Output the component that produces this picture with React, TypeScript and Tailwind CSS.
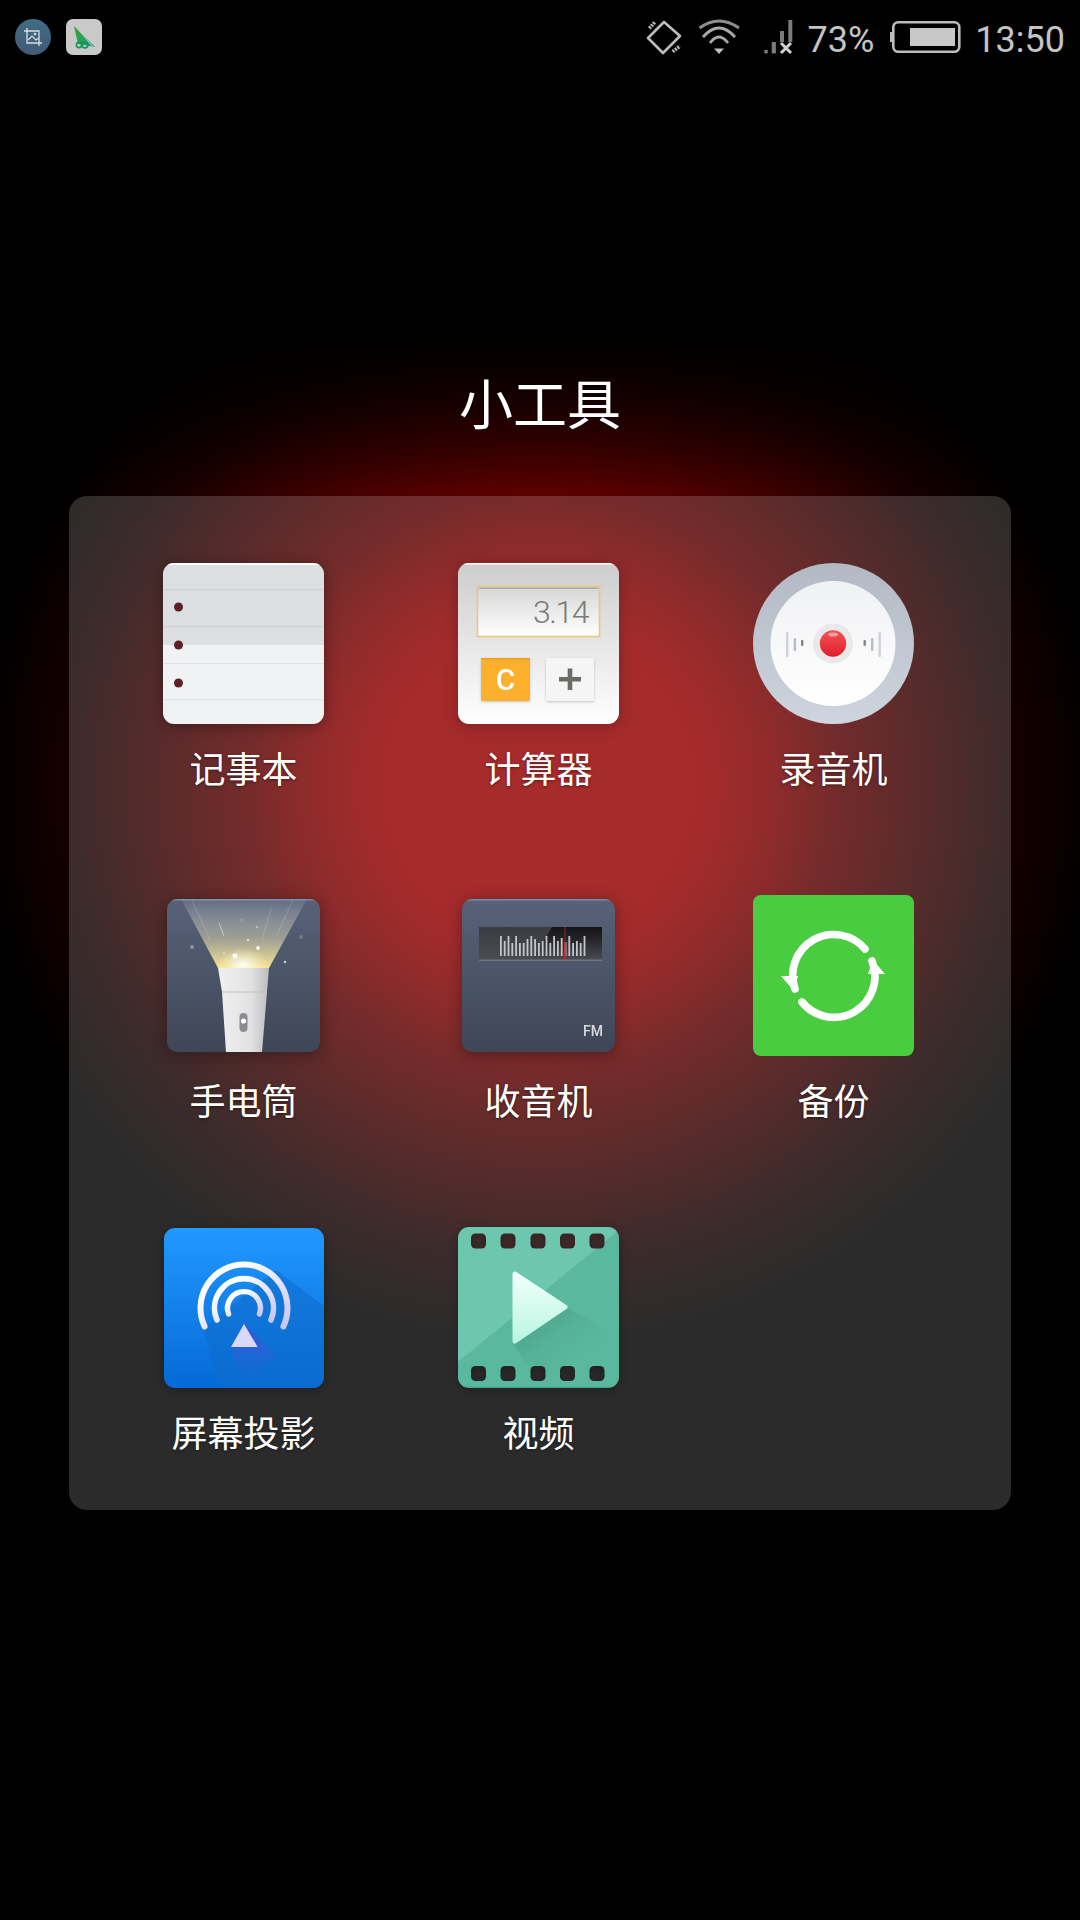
import React from "react";

const radioBars = [20, 15, 20, 13, 20, 13, 13, 17, 20, 17, 13, 15, 20, 13, 20, 15, 18, 14, 20, 13, 15, 13, 20];

function NotesIcon() {
  return (
    <svg width="161" height="161" viewBox="0 0 161 161" className="drop-shadow-[0_2px_7px_rgba(0,0,0,0.35)]">
      <defs>
        <clipPath id="notesClip"><rect width="161" height="161" rx="11" /></clipPath>
      </defs>
      <g clipPath="url(#notesClip)">
        <rect width="161" height="82" fill="#dcdfe2" />
        <rect y="82" width="161" height="79" fill="#f1f2f4" />
        <rect width="161" height="2" fill="#ffffff" />
        <rect y="26" width="161" height="1.2" fill="#cfd2d6" />
        <rect y="63" width="161" height="1.2" fill="#cfd2d6" />
        <rect y="100" width="161" height="1.2" fill="#e2e3e6" />
        <rect y="136" width="161" height="1.2" fill="#e2e3e6" />
        <circle cx="15.5" cy="44" r="4.5" fill="#5a2228" />
        <circle cx="15.5" cy="82" r="4.5" fill="#5a2228" />
        <circle cx="15.5" cy="120" r="4.5" fill="#5a2228" />
      </g>
    </svg>
  );
}

function CalcIcon() {
  return (
    <svg width="161" height="161" viewBox="0 0 161 161" className="drop-shadow-[0_2px_7px_rgba(0,0,0,0.25)]">
      <defs>
        <linearGradient id="calcBg" x1="0" y1="0" x2="0" y2="1">
          <stop offset="0" stopColor="#cdcdcd" />
          <stop offset="1" stopColor="#ffffff" />
        </linearGradient>
        <linearGradient id="calcDisp" x1="0" y1="0" x2="0" y2="1">
          <stop offset="0" stopColor="#d6d6d6" />
          <stop offset="1" stopColor="#ffffff" />
        </linearGradient>
        <filter id="calcBtn" x="-20%" y="-20%" width="140%" height="140%">
          <feDropShadow dx="0" dy="1" stdDeviation="1" floodColor="#000000" floodOpacity="0.22" />
        </filter>
        <clipPath id="calcClip"><rect width="161" height="161" rx="11" /></clipPath>
      </defs>
      <g clipPath="url(#calcClip)">
        <rect width="161" height="161" fill="url(#calcBg)" />
        <rect width="161" height="1.5" fill="#ffffff" />
      </g>
      <rect x="19.5" y="23.5" width="122" height="50" fill="url(#calcDisp)" stroke="#e8c87c" strokeWidth="1.6" />
      <rect x="21" y="24.5" width="119" height="1.4" fill="#a9a9a9" />
      <text x="130" y="60" textAnchor="end" fontFamily="Roboto, sans-serif" fontWeight="300" fontSize="32" fill="#7b7b76" letterSpacing="-1.5">3.14</text>
      <rect x="23" y="95" width="49" height="43" rx="1.5" fill="#fdb02d" filter="url(#calcBtn)" />
      <rect x="23" y="95" width="49" height="1.5" fill="#f09e22" />
      <text x="47.5" y="127" textAnchor="middle" fontFamily="Roboto, sans-serif" fontWeight="500" fontSize="30" fill="#ffffff">C</text>
      <rect x="88" y="95" width="48" height="43" rx="1.5" fill="#f5f5f5" filter="url(#calcBtn)" />
      <path d="M112 105.5V127M101 116.3H123" stroke="#6c6c66" strokeWidth="4.6" fill="none" />
    </svg>
  );
}

function RecorderIcon() {
  const bars: [number, number, number, string][] = [
    [33, 69, 25, "#cfd2d8"],
    [40.7, 75, 13, "#b9bcc2"],
    [48, 77, 6, "#80858b"],
    [110.5, 77, 6, "#80858b"],
    [118, 75, 13, "#b9bcc2"],
    [125.5, 69, 25, "#cfd2d8"],
  ];
  return (
    <svg width="161" height="161" viewBox="0 0 161 161">
      <defs>
        <linearGradient id="recOuter" x1="0" y1="0" x2="0" y2="1">
          <stop offset="0" stopColor="#b2b9c2" />
          <stop offset="1" stopColor="#ced5df" />
        </linearGradient>
        <linearGradient id="recInner" x1="0" y1="0" x2="0" y2="1">
          <stop offset="0" stopColor="#f0f1f3" />
          <stop offset="1" stopColor="#ffffff" />
        </linearGradient>
        <linearGradient id="recRed" x1="0" y1="0" x2="0" y2="1">
          <stop offset="0" stopColor="#f25252" />
          <stop offset="1" stopColor="#e01f30" />
        </linearGradient>
      </defs>
      <circle cx="80.5" cy="80.5" r="80.5" fill="url(#recOuter)" />
      <circle cx="80" cy="80.5" r="62.5" fill="url(#recInner)" />
      <circle cx="80" cy="80.5" r="20" fill="#e9e9ea" />
      <circle cx="80" cy="80.5" r="13.2" fill="url(#recRed)" />
      <ellipse cx="80" cy="71.5" rx="5" ry="2" fill="#ffffff" opacity="0.45" />
      {bars.map(([x, y, h, c], i) => (
        <rect key={i} x={x} y={y} width="2.4" height={h} rx="1" fill={c} />
      ))}
    </svg>
  );
}

function FlashIcon() {
  return (
    <svg width="153" height="153" viewBox="0 0 153 153" className="drop-shadow-[0_3px_8px_rgba(0,0,0,0.35)]">
      <defs>
        <linearGradient id="flashBg" x1="0" y1="0" x2="0" y2="1">
          <stop offset="0" stopColor="#576279" />
          <stop offset="1" stopColor="#3f4656" />
        </linearGradient>
        <linearGradient id="flashBeam" x1="0" y1="0" x2="0" y2="1">
          <stop offset="0" stopColor="#ffffff" stopOpacity="0.06" />
          <stop offset="0.55" stopColor="#d8d3b0" stopOpacity="0.55" />
          <stop offset="1" stopColor="#f6e58e" stopOpacity="1" />
        </linearGradient>
        <linearGradient id="flashBody" x1="0" y1="0" x2="1" y2="0">
          <stop offset="0" stopColor="#f0f0f0" />
          <stop offset="0.65" stopColor="#e2e2e4" />
          <stop offset="1" stopColor="#bcbcc0" />
        </linearGradient>
        <radialGradient id="flashGlow">
          <stop offset="0" stopColor="#ffffff" stopOpacity="0.95" />
          <stop offset="1" stopColor="#fff8c8" stopOpacity="0" />
        </radialGradient>
        <clipPath id="flashClip"><rect width="153" height="153" rx="10" /></clipPath>
      </defs>
      <g clipPath="url(#flashClip)">
        <rect width="153" height="153" fill="url(#flashBg)" />
        <rect width="153" height="1.6" fill="#7388a8" />
        <polygon points="14,0 140,0 102,69 51,69" fill="url(#flashBeam)" />
        <ellipse cx="76" cy="66" rx="26" ry="17" fill="url(#flashGlow)" />
        <g stroke="#ffffff" strokeOpacity="0.22" strokeWidth="0.8" fill="none">
          <path d="M52 24L57 37" strokeOpacity="0.6" />
          <path d="M104 9L95 41" />
          <path d="M126 1L110 36" />
          <path d="M25 1L43 41" />
        </g>
        <circle cx="25" cy="48" r="2" fill="#ffffff" opacity="0.35" />
        <circle cx="134" cy="38" r="2" fill="#ffffff" opacity="0.18" />
        <circle cx="68" cy="57" r="2.4" fill="#ffffff" />
        <circle cx="91" cy="49" r="1.9" fill="#ffffff" opacity="0.85" />
        <circle cx="81" cy="41" r="1.3" fill="#ffffff" opacity="0.6" />
        <circle cx="90" cy="28" r="1.3" fill="#ffffff" opacity="0.35" />
        <circle cx="75" cy="21" r="1.1" fill="#ffffff" opacity="0.25" />
        <circle cx="118" cy="63" r="1.2" fill="#ffffff" opacity="0.75" />
        <circle cx="57" cy="54" r="1.5" fill="#ffffff" opacity="0.3" />
        <polygon points="51,69 102,69 100,93 95,153 59,153 55,93" fill="url(#flashBody)" />
        <path d="M55 93H100" stroke="#c4c4c6" strokeWidth="1" />
        <rect x="72.5" y="114" width="8" height="19" rx="4" fill="#8c8c8e" />
        <circle cx="76.5" cy="122" r="2.6" fill="#ffffff" />
      </g>
    </svg>
  );
}

function RadioIcon() {
  return (
    <svg width="153" height="153" viewBox="0 0 153 153" className="drop-shadow-[0_3px_8px_rgba(0,0,0,0.35)]">
      <defs>
        <linearGradient id="radioBg" x1="0" y1="0" x2="0" y2="1">
          <stop offset="0" stopColor="#576279" />
          <stop offset="1" stopColor="#3f4656" />
        </linearGradient>
        <linearGradient id="radioDisp" x1="0" y1="0" x2="0" y2="1">
          <stop offset="0" stopColor="#3b3c41" />
          <stop offset="1" stopColor="#4a4c52" />
        </linearGradient>
        <linearGradient id="radioDark" x1="0" y1="0" x2="0" y2="1">
          <stop offset="0" stopColor="#131315" stopOpacity="0.95" />
          <stop offset="1" stopColor="#131315" stopOpacity="0" />
        </linearGradient>
        <clipPath id="radioClip"><rect width="153" height="153" rx="10" /></clipPath>
      </defs>
      <g clipPath="url(#radioClip)">
        <rect width="153" height="153" fill="url(#radioBg)" />
        <rect width="153" height="1.6" fill="#7388a8" />
      </g>
      <rect x="17" y="28" width="123" height="33" fill="url(#radioDisp)" />
      <polygon points="90,28 140,28 140,61 70,61" fill="url(#radioDark)" />
      <rect x="17" y="60.5" width="123" height="1.6" fill="#71757f" />
      {radioBars.map((h, i) => (
        <rect key={i} x={38 + i * 3.8} y={57 - h} width="1.8" height={h} fill="#c3c5c8" />
      ))}
      <rect x="102.2" y="28" width="1.6" height="15" fill="#6e2024" />
      <rect x="102.2" y="43" width="1.6" height="18" fill="#e8191f" />
      <text x="141" y="137" textAnchor="end" fontFamily="Roboto, sans-serif" fontWeight="500" fontSize="14" fill="#d8dae0">FM</text>
    </svg>
  );
}

function BackupIcon() {
  return (
    <svg width="161" height="161" viewBox="0 0 161 161">
      <rect width="161" height="161" rx="8" fill="#49cc3f" />
      <path d="M112 54A41 41 0 0 0 42 94" stroke="#ffffff" strokeWidth="7.6" strokeLinecap="round" fill="none" />
      <path d="M49 107A41 41 0 0 0 119 66" stroke="#ffffff" strokeWidth="7.6" strokeLinecap="round" fill="none" />
      <polygon points="28,81 45,81 41,96" fill="#ffffff" />
      <polygon points="132,79 115,79 120,65" fill="#ffffff" />
    </svg>
  );
}

function CastIcon() {
  return (
    <svg width="160" height="160" viewBox="0 0 160 160" className="drop-shadow-[0_2px_6px_rgba(0,0,0,0.3)]">
      <defs>
        <linearGradient id="castBg" x1="0" y1="0" x2="0" y2="1">
          <stop offset="0" stopColor="#2299ff" />
          <stop offset="1" stopColor="#0569d6" />
        </linearGradient>
        <linearGradient id="castArc" x1="0" y1="0" x2="1" y2="1">
          <stop offset="0.2" stopColor="#ffffff" />
          <stop offset="1" stopColor="#c8c6f4" />
        </linearGradient>
        <linearGradient id="castTri" x1="0" y1="0" x2="0" y2="1">
          <stop offset="0" stopColor="#3f50d6" />
          <stop offset="1" stopColor="#2f5fd8" stopOpacity="0" />
        </linearGradient>
        <clipPath id="castClip"><rect width="160" height="160" rx="11" /></clipPath>
      </defs>
      <g clipPath="url(#castClip)">
        <rect width="160" height="160" fill="url(#castBg)" />
        <polygon points="112,42 160,78 160,160 55,160 40,100" fill="#0f6ccb" opacity="0.55" />
        <polygon points="67,119 80,96 112,128 90,150 75,148" fill="url(#castTri)" />
      </g>
      <g stroke="url(#castArc)" fill="none" strokeLinecap="round">
        <path d="M40.6 98.5A43.5 43.5 0 1 1 119.4 98.5" strokeWidth="6" />
        <path d="M53 92A29.5 29.5 0 1 1 107 92" strokeWidth="5.6" />
        <path d="M64.6 86A16.5 16.5 0 1 1 95.4 86" strokeWidth="5.4" />
      </g>
      <polygon points="80,96 67,119 93.7,119" fill="#d9d7fa" />
    </svg>
  );
}

function VideoIcon() {
  const xs = [13, 42.5, 72.5, 102, 131.5];
  const ys = [6.5, 139];
  return (
    <svg width="161" height="161" viewBox="0 0 161 161" className="drop-shadow-[0_2px_5px_rgba(0,0,0,0.25)]">
      <defs>
        <linearGradient id="videoPlay" x1="0" y1="0" x2="0" y2="1">
          <stop offset="0" stopColor="#f0fffa" />
          <stop offset="1" stopColor="#baf5e2" />
        </linearGradient>
        <linearGradient id="videoShade" x1="0" y1="0" x2="1" y2="1">
          <stop offset="0" stopColor="#3f8a76" stopOpacity="0.75" />
          <stop offset="0.7" stopColor="#59b79c" stopOpacity="0" />
        </linearGradient>
        <mask id="videoHoles">
          <rect width="161" height="161" rx="11" fill="#ffffff" />
          {ys.map((y) =>
            xs.map((x) => <rect key={`${x}-${y}`} x={x} y={y} width="15" height="15" rx="4.5" fill="#000000" />)
          )}
        </mask>
      </defs>
      <g mask="url(#videoHoles)">
        <rect width="161" height="161" fill="#6dc6ae" />
        <polygon points="161,3 161,161 0,161 0,135" fill="#59b89d" />
        <polygon points="55,116 108,80 161,110 161,161 85,161" fill="url(#videoShade)" />
        <rect y="159.5" width="161" height="1.5" fill="#4ba88e" />
      </g>
      <polygon points="57,47 107,80 57,114" fill="url(#videoPlay)" stroke="url(#videoPlay)" strokeWidth="5" strokeLinejoin="round" />
    </svg>
  );
}

function AppCell({ label, children }: { label: string; children: React.ReactNode }) {
  return (
    <div className="flex flex-col items-center">
      <div className="flex h-[161px] w-[161px] items-center justify-center">{children}</div>
      <div className="mb-[2px] mt-[18px] h-[50px] whitespace-nowrap text-[36px] leading-[50px] text-white [text-shadow:0_1px_3px_rgba(0,0,0,0.45)]">
        {label}
      </div>
    </div>
  );
}

export default function App() {
  return (
    <div className="flex h-[1920px] w-[1080px] flex-col overflow-hidden bg-[linear-gradient(to_bottom,#000000_330px,rgba(0,0,0,0.6)_400px,rgba(0,0,0,0)_490px),radial-gradient(circle_560px_at_540px_785px,#960000_0%,#930000_30%,#780000_42%,#5a0000_52%,#320000_71%,#160000_84%,#0c0000_92%,#000000_100%)] font-['Noto_Sans_CJK_SC',sans-serif]">
      <div className="flex h-[74px] items-start">
        <div className="flex gap-[15px] pl-[15px] pt-[19px]">
          <svg width="36" height="36" viewBox="0 0 36 36">
            <defs>
              <linearGradient id="cropBg" x1="0" y1="0" x2="0" y2="1">
                <stop offset="0" stopColor="#3f6b84" />
                <stop offset="1" stopColor="#425a75" />
              </linearGradient>
            </defs>
            <circle cx="18" cy="18" r="18" fill="url(#cropBg)" />
            <path d="M12 9V24H27M9 12H24V27" stroke="#d8dee3" strokeWidth="1.3" fill="none" />
            <path d="M13 21L17 17L21 21L24 19" stroke="#d8dee3" strokeWidth="1.2" fill="none" />
            <circle cx="20" cy="15" r="1.3" fill="#d8dee3" />
          </svg>
          <svg width="36" height="36" viewBox="0 0 36 36">
            <defs>
              <linearGradient id="sailBg" x1="0" y1="0" x2="1" y2="1">
                <stop offset="0" stopColor="#35a81f" />
                <stop offset="1" stopColor="#159e96" />
              </linearGradient>
            </defs>
            <rect width="36" height="36" rx="7" fill="#c9c9c9" />
            <polygon points="8,7 29,28 12,25" fill="url(#sailBg)" />
            <path d="M10 8L27 28" stroke="#c9c9c9" strokeWidth="0.9" />
            <circle cx="13" cy="26" r="2.6" fill="none" stroke="#17935c" strokeWidth="1.6" />
            <circle cx="19" cy="26" r="2.9" fill="none" stroke="#17935c" strokeWidth="1.6" />
          </svg>
        </div>
        <div className="ml-auto flex items-center pr-[15px] pt-[18px] font-['Roboto',sans-serif] text-[36px] leading-[40px] text-[#c4c4c4]">
          <svg width="40" height="40" viewBox="0 0 40 40" fill="none" stroke="#bcbcbc">
            <polygon points="19,4 35,18 18,35 3,20" strokeWidth="2.6" strokeLinejoin="round" />
            <path d="M4.3 10.3L10.3 3.7M27.7 33.7L35 28" strokeWidth="3.6" strokeDasharray="2 1" />
          </svg>
          <svg className="ml-[10px]" width="48" height="40" viewBox="0 0 48 40" fill="none" stroke="#8e8e8e" strokeWidth="2.8">
            <path d="M4.5 10Q24 -4 44 10" />
            <path d="M8 19Q24 1 40 19" stroke="#a8a8a8" />
            <path d="M15 25Q24 13 33 25" stroke="#a8a8a8" />
            <polygon points="24,36 19,30.5 29,30.5" fill="#c0c0c0" stroke="none" />
          </svg>
          <svg className="ml-[17px]" width="35" height="40" viewBox="0 0 35 40">
            <rect x="4.3" y="32" width="3.4" height="3.4" fill="#7c7c7c" />
            <rect x="11.7" y="24" width="4.2" height="11.4" fill="#7c7c7c" />
            <rect x="20" y="13" width="4" height="11" fill="#7c7c7c" />
            <rect x="28.3" y="2" width="4" height="22" fill="#7c7c7c" />
            <path d="M21 25L31 35M31 25L21 35" stroke="#d0d0d0" strokeWidth="3" />
          </svg>
          <span className="ml-[13px] translate-y-[2px]">73%</span>
          <svg className="ml-[14px]" width="74" height="40" viewBox="0 0 74 40">
            <rect x="5.3" y="4.2" width="66" height="29.6" rx="5" fill="none" stroke="#bcbcbc" strokeWidth="2.6" />
            <rect x="2" y="14" width="3.2" height="10" fill="#bcbcbc" />
            <rect x="22" y="10" width="45" height="18" fill="#c8c8c8" />
          </svg>
          <span className="ml-[13px] translate-y-[2px]">13:50</span>
        </div>
      </div>

      <h1 className="mb-[54px] mt-[288px] text-center text-[54px] font-normal leading-[80px] text-white">小工具</h1>

      <div className="ml-[69px] h-[1014px] w-[942px] rounded-[18px] bg-[rgba(255,255,255,0.17)] pl-[27px] pt-[67px]">
        <div className="grid grid-cols-[repeat(3,295px)] gap-y-[101px]">
          <AppCell label="记事本"><NotesIcon /></AppCell>
          <AppCell label="计算器"><CalcIcon /></AppCell>
          <AppCell label="录音机"><RecorderIcon /></AppCell>
          <AppCell label="手电筒"><FlashIcon /></AppCell>
          <AppCell label="收音机"><RadioIcon /></AppCell>
          <AppCell label="备份"><BackupIcon /></AppCell>
          <AppCell label="屏幕投影"><CastIcon /></AppCell>
          <AppCell label="视频"><VideoIcon /></AppCell>
        </div>
      </div>
    </div>
  );
}
